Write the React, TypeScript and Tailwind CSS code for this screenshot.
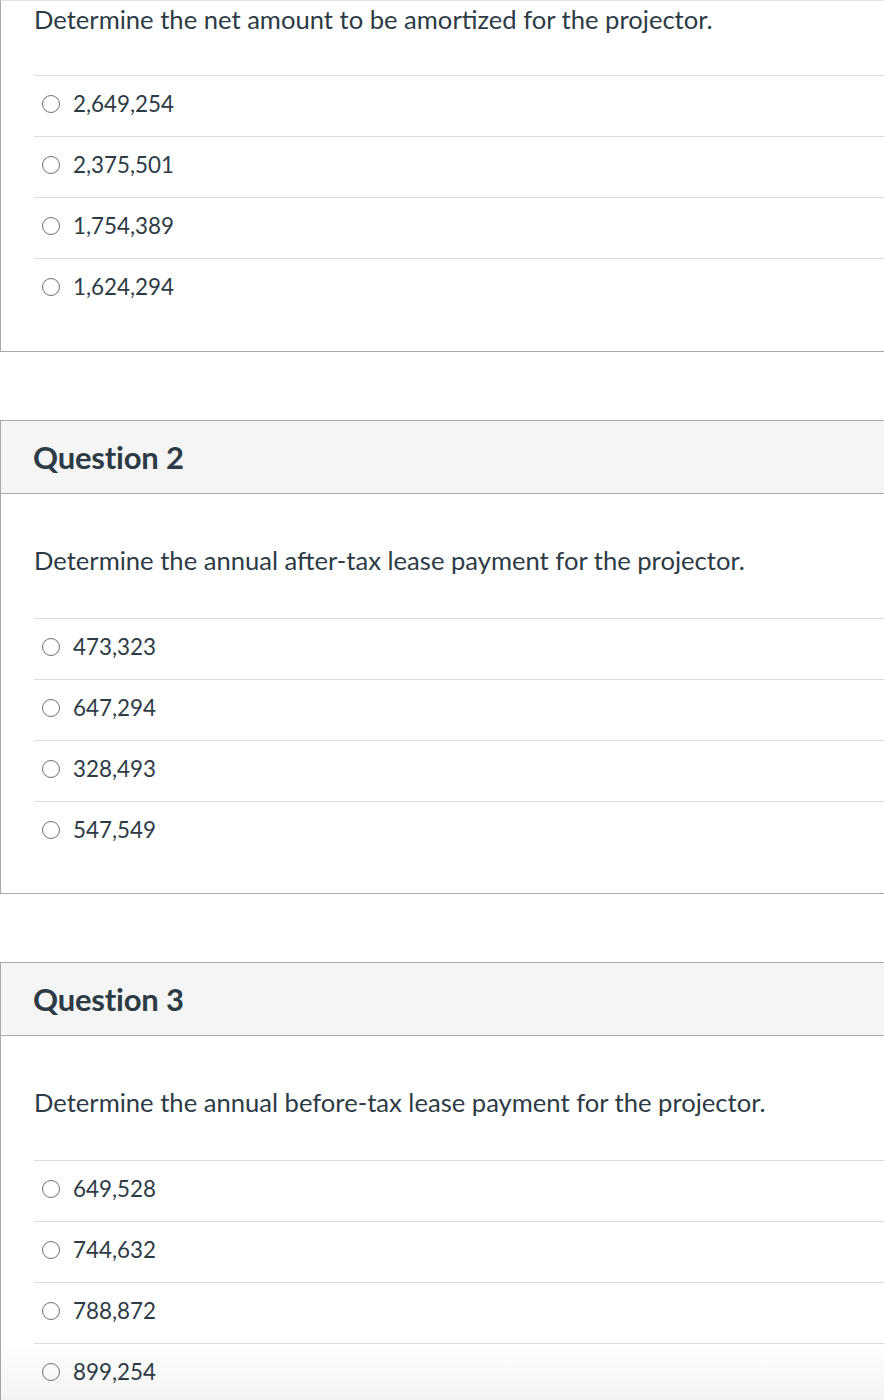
import React from 'react';

type Question = {
  title?: string;
  text: string;
  answers: string[];
};

const questions: Question[] = [
  {
    text: 'Determine the net amount to be amortized for the projector.',
    answers: ['2,649,254', '2,375,501', '1,754,389', '1,624,294'],
  },
  {
    title: 'Question 2',
    text: 'Determine the annual after-tax lease payment for the projector.',
    answers: ['473,323', '647,294', '328,493', '547,549'],
  },
  {
    title: 'Question 3',
    text: 'Determine the annual before-tax lease payment for the projector.',
    answers: ['649,528', '744,632', '788,872', '899,254'],
  },
];

const Radio = () => (
  <span className="inline-block w-[18px] h-[18px] rounded-full border-[1.5px] border-[#707070] bg-white shrink-0" />
);

const QuestionCard = ({ q, first }: { q: Question; first?: boolean }) => (
  <div
    className={
      first
        ? 'border-l border-b border-t border-[#a9a9a9] border-t-[#e3e3e3]'
        : 'mt-[68px] border-l border-b border-t border-[#a9a9a9]'
    }
  >
    {q.title && (
      <div className="h-[73px] bg-[#f5f5f5] border-b border-[#a9a9a9] flex items-center pl-[32px]">
        <h2 className="text-[31px] font-bold leading-none tracking-[-0.2px]">{q.title}</h2>
      </div>
    )}
    <div className={first ? 'pl-[33px] pb-[32px]' : 'pl-[33px] pt-[48px] pb-[31px]'}>
      <p className="text-[25.6px] leading-[36px]">{q.text}</p>
      <div className={first ? 'mt-[38px]' : 'mt-[40px]'}>
        {q.answers.map((a) => (
          <div key={a} className="border-t border-[#dedede] pt-[13px] pb-[17px] flex items-center pl-[8px]">
            <Radio />
            <span className="ml-[13px] text-[22.4px] leading-[30px]">{a}</span>
          </div>
        ))}
      </div>
    </div>
  </div>
);

export default function App() {
  return (
    <div
      className="relative w-[884px] h-[1400px] overflow-hidden bg-white text-[#2d3b45]"
      style={{ fontFamily: 'Lato, "Open Sans", sans-serif' }}
    >
      {questions.map((q, i) => (
        <QuestionCard key={i} q={q} first={i === 0} />
      ))}
      <div className="pointer-events-none absolute left-0 right-0 bottom-0 h-[57px] bg-linear-to-b from-black/0 to-black/[0.05]" />
    </div>
  );
}
